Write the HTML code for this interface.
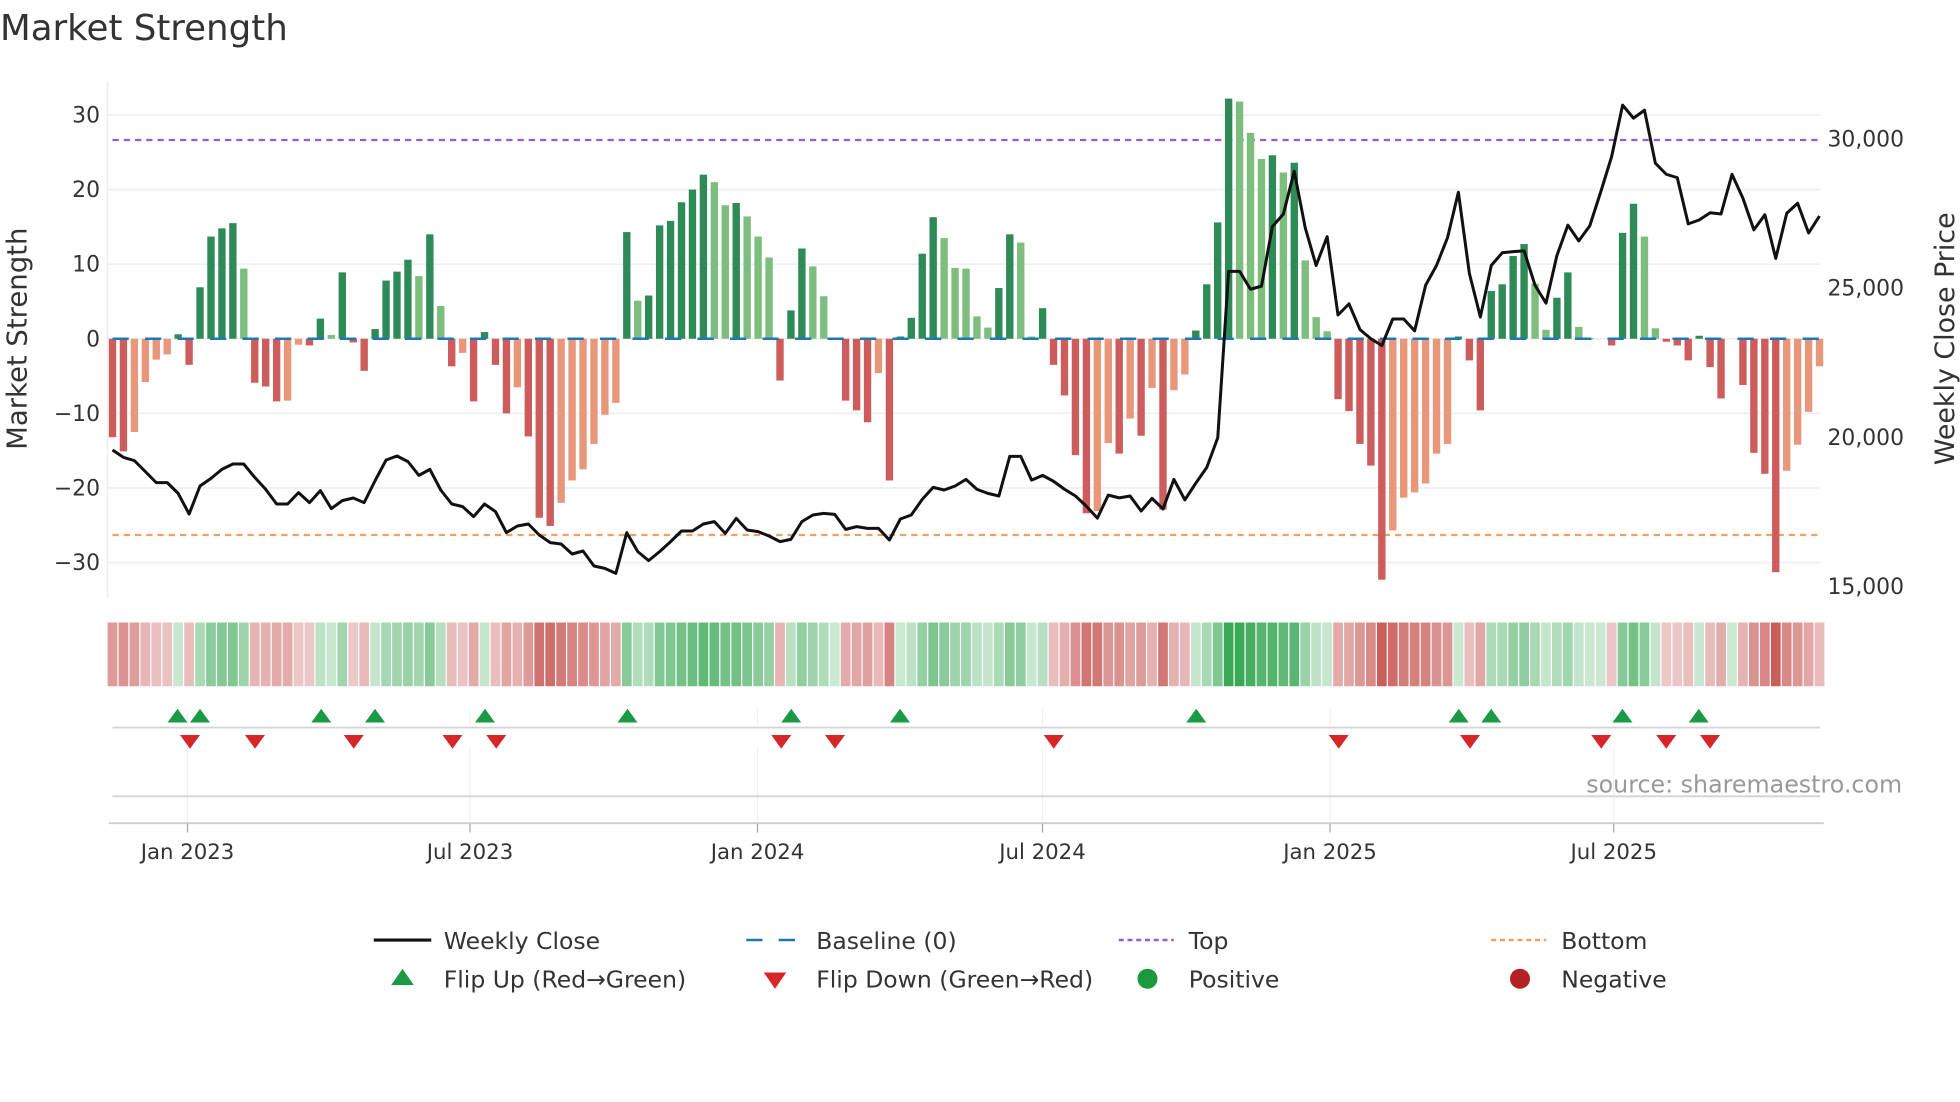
<!DOCTYPE html>
<html><head><meta charset="utf-8">
<style>
html,body{margin:0;padding:0;background:#fff;}
svg{display:block;}
text{font-family:"DejaVu Sans","Liberation Sans",sans-serif;fill:#333;}
</style></head>
<body>
<svg id="c" width="1960" height="1102" viewBox="0 0 1568 881.6" xmlns="http://www.w3.org/2000/svg">
<rect width="1568" height="882" fill="#fff"/>
<text x="0" y="32" font-size="28.5" fill="#333">Market Strength</text>
<g id="grid"></g>
<g id="bars"></g>
<g id="heat"></g>
<g id="ann"></g>
<text x="1269" y="634" font-size="19" fill="#999" style="fill:#999">source: sharemaestro.com</text>
<text transform="translate(21,271) rotate(-90)" text-anchor="middle" font-size="22">Market Strength</text>
<text transform="translate(1563,271) rotate(-90)" text-anchor="middle" font-size="21.5">Weekly Close Price</text>
<!-- legend -->
<g font-size="18.8">
<line x1="299" y1="752" x2="345" y2="752" stroke="#111" stroke-width="2.5"/>
<text x="355" y="759">Weekly Close</text>
<line x1="597" y1="752" x2="641" y2="752" stroke="#1f77b4" stroke-width="2" stroke-dasharray="13,13"/>
<text x="653" y="759">Baseline (0)</text>
<line x1="895" y1="752" x2="939" y2="752" stroke="#9b59d6" stroke-width="2" stroke-dasharray="4,3"/>
<text x="951" y="759">Top</text>
<line x1="1193" y1="752" x2="1237" y2="752" stroke="#f0a060" stroke-width="2" stroke-dasharray="4,3"/>
<text x="1249" y="759">Bottom</text>
<polygon points="313,788 322,775 331,788" fill="#1a9a45"/>
<text x="355" y="790">Flip Up (Red→Green)</text>
<polygon points="611,778 629,778 620,791" fill="#d62728"/>
<text x="653" y="790">Flip Down (Green→Red)</text>
<circle cx="918" cy="783" r="8" fill="#1a9a3a"/>
<text x="951" y="790">Positive</text>
<circle cx="1216" cy="783" r="8" fill="#b22222"/>
<text x="1249" y="790">Negative</text>
</g>
</svg>
<script>
var NS="http://www.w3.org/2000/svg";
function el(p,t,a,txt){var e=document.createElementNS(NS,t);for(var k in a)e.setAttribute(k,a[k]);if(txt!==undefined)e.textContent=txt;p.appendChild(e);return e;}
var grid=document.getElementById('grid'),bars=document.getElementById('bars'),heat=document.getElementById('heat'),ann=document.getElementById('ann');
function vy(v){return 271-v*5.967;}
for(var v=-30;v<=30;v+=10){var y=vy(v);el(grid,'line',{x1:86,x2:1456,y1:y,y2:y,stroke:'#eceff4','stroke-width':1.3});
 el(grid,'text',{x:80,y:y+6,'text-anchor':'end','font-size':17.5},(v<0?'\u2212':'')+Math.abs(v));}
el(grid,'line',{x1:86,x2:86,y1:65,y2:478,stroke:'#eceff4','stroke-width':1.3});
var rp=[[111,'30,000'],[230.5,'25,000'],[350,'20,000'],[469,'15,000']];
rp.forEach(function(r){el(grid,'text',{x:1462,y:r[0]+6,'font-size':17.5},r[1]);});
var months=[[150,'Jan 2023'],[376,'Jul 2023'],[606,'Jan 2024'],[834,'Jul 2024'],[1064,'Jan 2025'],[1291,'Jul 2025']];
months.forEach(function(m){el(grid,'line',{x1:m[0],x2:m[0],y1:567,y2:580,stroke:'#eef0f4','stroke-width':1});
 el(grid,'line',{x1:m[0],x2:m[0],y1:598,y2:662,stroke:'#eef0f4','stroke-width':1});
 el(grid,'line',{x1:m[0],x2:m[0],y1:658,y2:666,stroke:'#aaa','stroke-width':1});
 el(grid,'text',{x:m[0],y:687,'text-anchor':'middle','font-size':17},m[1]);});
el(grid,'line',{x1:90,x2:1456,y1:582,y2:582,stroke:'#d4d4d4','stroke-width':1.5});
el(grid,'line',{x1:90,x2:1456,y1:637,y2:637,stroke:'#d4d4d4','stroke-width':1.5});
el(grid,'line',{x1:87,x2:1459,y1:658.5,y2:658.5,stroke:'#d0d0d0','stroke-width':1.5});
var V=[-13.2,-15.1,-12.5,-5.8,-2.8,-2.1,0.6,-3.5,6.9,13.7,14.8,15.5,9.4,-5.9,-6.4,-8.4,-8.3,-0.8,-0.9,2.7,0.5,8.9,-0.5,-4.3,1.3,7.8,9.0,10.6,8.4,14.0,4.4,-3.7,-1.9,-8.4,0.9,-3.5,-10.0,-6.5,-13.1,-24,-25.1,
-22,-19,-17.5,-14.1,-10.2,-8.6,14.3,5.1,5.8,15.2,15.8,18.3,20,22,21,17.9,18.2,16.4,13.7,10.9,-5.6,3.8,12.1,9.7,5.7,0,-8.3,-9.6,-11.2,-4.6,-19,0.3,2.8,11.4,16.3,13.5,9.5,9.4,3.0,1.5,
6.8,14,12.9,0.3,4.1,-3.5,-7.6,-15.6,-23.4,-23.1,-14,-15.4,-10.7,-13,-6.6,-22.9,-6.9,-4.8,1.1,7.3,15.6,32.2,31.8,27.6,24.1,24.6,22.3,23.6,10.5,2.9,1.0,-8.1,-9.7,-14.1,-17,-32.3,-25.7,-21.3,-20.6,-19.4,
-15.4,-14.1,0.3,-2.9,-9.6,6.4,7.3,11.1,12.7,7.4,1.2,5.5,8.9,1.6,0.1,0,-0.9,14.2,18.1,13.7,1.4,-0.4,-0.9,-2.9,0.4,-3.8,-8.0,0,-6.2,-15.3,-18.1,-31.3,-17.7,-14.2,-9.8,-3.7];
var P=8.754,X0=90,BW=5.9;
function bx(i){return X0+i*P;}
el(bars,'line',{x1:90,x2:1456,y1:112,y2:112,stroke:'#9b59d6','stroke-width':1.8,'stroke-dasharray':'5,4'});
el(bars,'line',{x1:90,x2:1456,y1:428,y2:428,stroke:'#f0a060','stroke-width':1.8,'stroke-dasharray':'5,4'});
for(var i=0;i<V.length;i++){var v=V[i];if(v===0)continue;var prev=i>0?V[i-1]:0;var light=Math.abs(v)<Math.abs(prev)&&(v*prev>0);
 var col=v>0?(light?'#7dbd7d':'#2e8b57'):(light?'#e8977a':'#cd5c5c');
 var y0=vy(Math.max(v,0)),h=Math.abs(v)*5.967;
 el(bars,'rect',{x:bx(i)-BW/2,y:y0,width:BW,height:Math.max(h,1),fill:col});}
el(bars,'line',{x1:90,x2:1456,y1:271,y2:271,stroke:'#1f77b4','stroke-width':2,'stroke-dasharray':'13,13'});
function mix(a,b,t){return 'rgb('+[0,1,2].map(function(k){return Math.round(a[k]+(b[k]-a[k])*t);}).join(',')+')';}
for(var i=0;i<V.length;i++){var v=V[i];var t=Math.min(Math.abs(v)/30,1);var c;
 if(v>=0)c=mix([225,242,228],[40,160,72],0.12+0.78*t);else c=mix([242,218,218],[196,80,76],0.12+0.78*t);
 el(heat,'rect',{x:bx(i)-3.9,y:498,width:7.8,height:51,fill:c});}
var s1=[750,772,782,815,848,848,880,942,858,835,808,792,792,832,868,912,912,878,908,872,926,902,894,908,842,780,768,785,826,808,870,912,920,950,912,935,998,978,972,1005,1028];
var s2=[1032,1062,1053,1098,1105,1120,998,1055,1082,1055,1025,993,993,972,965,1000,955,990,995,1008,1025,1018,965,945,940,943,988,980,985,985,1020,957,945,898,862,870,858,838,868,880];
var s3=[1052,952,952,1012,1000,1015,1035,1052,1078,1108,1050,1057,1052,1090,1058,1085,1010,1062,1020,980,905,485,485,530,522,372,340,232,375,470,397,595,567,632,655,672,605,605,635,520];
var s4=[470,400,285,490,600,470,438,435,433,520,565,445,368,408,370,285,195,65,98,78,212,240,248,365,355,337,340,240,300,380,342,452,338,313,388,345];
var pts=[];
s1.concat(s2).forEach(function(z,i){pts.push(bx(i).toFixed(1)+','+(160+z/3.75).toFixed(1));});
s3.concat(s4).forEach(function(z,j){var i=81+j;pts.push(bx(i).toFixed(1)+','+(92+(z-90)*0.3168).toFixed(1));});
el(bars,'polyline',{points:pts.join(' '),fill:'none',stroke:'#111','stroke-width':2.4,'stroke-linejoin':'round'});
var ups=[142,160,257,300,388,502,633,720,957,1167,1193,1298,1359];
var dns=[152,204,283,362,397,625,668,843,1071,1176,1281,1333,1368];
ups.forEach(function(x){el(ann,'polygon',{points:(x-8)+',578 '+x+',567 '+(x+8)+',578',fill:'#1a9a45'});});
dns.forEach(function(x){el(ann,'polygon',{points:(x-8)+',588 '+(x+8)+',588 '+x+',599',fill:'#d62728'});});
</script>
</body></html>
